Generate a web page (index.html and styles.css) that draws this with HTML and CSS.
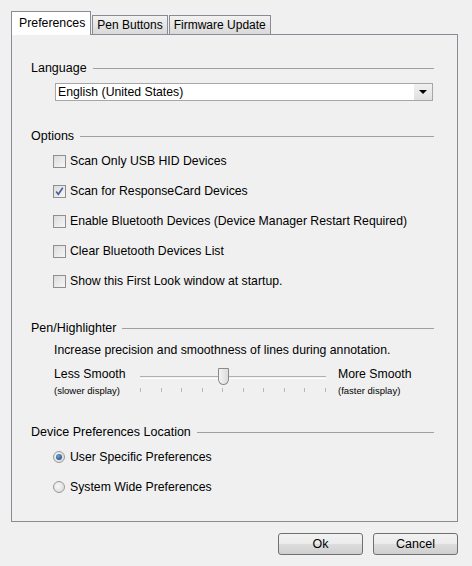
FILE: index.html
```html
<!DOCTYPE html>
<html>
<head>
<meta charset="utf-8">
<link rel="stylesheet" href="styles.css">
</head>
<body>
<div class="window">
  <div class="tabs">
    <div class="tab active">Preferences</div>
    <div class="tab">Pen Buttons</div>
    <div class="tab">Firmware Update</div>
  </div>
  <div class="panel">
    <div class="group-title t-lang"><span>Language</span></div>
    <div class="select">
      <div class="select-value">English (United States)</div>
      <div class="select-btn"><span class="arrow"></span></div>
    </div>

    <div class="group-title t-opts"><span>Options</span></div>
    <div class="options">
      <div class="row"><span class="cb"></span><span>Scan Only USB HID Devices</span></div>
      <div class="row"><span class="cb checked"><svg viewBox="0 0 11 11" width="11" height="11"><path d="M2.2 5.6 L4.3 8.3 L8.8 1.8" fill="none" stroke="#4b5e9c" stroke-width="1.6"/></svg></span><span>Scan for ResponseCard Devices</span></div>
      <div class="row"><span class="cb"></span><span>Enable Bluetooth Devices (Device Manager Restart Required)</span></div>
      <div class="row"><span class="cb"></span><span>Clear Bluetooth Devices List</span></div>
      <div class="row"><span class="cb"></span><span>Show this First Look window at startup.</span></div>
    </div>

    <div class="group-title t-pen"><span>Pen/Highlighter</span></div>
    <div class="desc">Increase precision and smoothness of lines during annotation.</div>
    <div class="slider-block">
      <div class="s-label">
        <div class="s-main">Less Smooth</div>
        <div class="s-sub">(slower display)</div>
      </div>
      <div class="slider">
        <div class="track"></div>
        <div class="thumb"></div>
        <div class="ticks">
          <i></i><i></i><i></i><i></i><i></i><i></i><i></i><i></i><i></i><i></i>
        </div>
      </div>
      <div class="s-label right">
        <div class="s-main">More Smooth</div>
        <div class="s-sub">(faster display)</div>
      </div>
    </div>

    <div class="group-title t-dev"><span>Device Preferences Location</span></div>
    <div class="radios">
      <div class="row"><span class="rb on"></span><span>User Specific Preferences</span></div>
      <div class="row"><span class="rb"></span><span>System Wide Preferences</span></div>
    </div>
  </div>
  <div class="buttons">
    <div class="btn">Ok</div>
    <div class="btn">Cancel</div>
  </div>
</div>
</body>
</html>
```
FILE: styles.css
```css
html, body {
  margin: 0;
  padding: 0;
  background: #f0f0f0;
}
body {
  width: 472px;
  height: 566px;
  overflow: hidden;
  font-family: "Liberation Sans", Arial, sans-serif;
  font-size: 12.25px;
  color: #000;
}
.window {
  padding-top: 11px;
}
.tabs {
  display: flex;
  align-items: flex-end;
  padding-left: 11px;
  height: 23px;
  position: relative;
  z-index: 2;
}
.tab {
  height: 19px;
  box-sizing: border-box;
  border: 1px solid #898c95;
  border-bottom: none;
  padding: 0 4px;
  line-height: 19px;
  font-size: 12px;
  background: linear-gradient(#f2f2f2, #d9d9d9);
  margin-left: 1px;
}
.tab.active {
  height: 24px;
  margin-left: 0;
  margin-bottom: -1px;
  background: #fff;
  padding: 0 5px 0 7px;
  line-height: 22px;
  font-size: 12.3px;
}
.panel {
  width: 447px;
  height: 488px;
  box-sizing: border-box;
  margin-left: 11px;
  border: 1px solid #898c95;
  padding: 0 23px 0 19px;
  position: relative;
  z-index: 1;
}
.group-title {
  display: flex;
  align-items: center;
  height: 16px;
  line-height: 16px;
  font-size: 12.5px;
}
.group-title::after {
  content: "";
  flex: 1;
  border-top: 1px solid #a0a0a0;
  margin-left: 6px;
  margin-top: 1px;
}
.t-lang { margin-top: 25px; }
.t-opts { margin-top: 27px; }
.t-pen { margin-top: 24px; }
.t-dev { margin-top: 28px; }

.select {
  display: flex;
  margin: 7px 1px 0 24px;
  height: 18px;
  box-sizing: border-box;
  border: 1px solid #a6a6a6;
  background: #fff;
}
.select-value {
  flex: 1;
  line-height: 16px;
  padding-left: 2px;
}
.select-btn {
  width: 18px;
  background: linear-gradient(#f1f1f1, #e0e0e0);
  display: flex;
  align-items: center;
  justify-content: center;
}
.arrow {
  width: 0;
  height: 0;
  border-left: 4px solid transparent;
  border-right: 4px solid transparent;
  border-top: 4px solid #000;
}
.options { margin-top: 2px; }
.row {
  display: flex;
  align-items: center;
  height: 30px;
  padding-left: 22px;
}
.cb {
  width: 13px;
  height: 13px;
  box-sizing: border-box;
  border: 1px solid #8f8f8f;
  background: linear-gradient(135deg, #dcdcdc, #f6f6f6);
  margin-right: 4px;
  display: flex;
  align-items: center;
  justify-content: center;
}
.cb svg { display: block; }
.desc {
  margin: 6px 0 0 23px;
  height: 16px;
  line-height: 16px;
}
.slider-block {
  display: flex;
  margin: 8px 0 0 23px;
  height: 30px;
}
.s-label { width: 86px; }
.s-label.right { width: auto; margin-left: 12px; }
.s-main { height: 16px; line-height: 16px; }
.s-sub { height: 14px; line-height: 14px; font-size: 9.5px; margin-top: 2px; }
.slider {
  width: 186px;
  position: relative;
}
.track {
  position: absolute;
  left: 0;
  right: 0;
  top: 10px;
  height: 1px;
  border-top: 1px solid #b0b0b0;
  border-bottom: 1px solid #fff;
}
.thumb {
  position: absolute;
  left: 78px;
  top: 2px;
  width: 11px;
  height: 17px;
  box-sizing: border-box;
  border: 1px solid #8a8a8a;
  border-radius: 1px 1px 5px 5px / 1px 1px 6px 6px;
  background: linear-gradient(90deg, #f4f4f4, #dcdcdc);
}
.ticks {
  position: absolute;
  left: 0;
  right: 0;
  top: 22px;
  height: 4px;
  display: flex;
  justify-content: space-between;
}
.ticks i {
  display: block;
  width: 1px;
  height: 4px;
  background: #b8b8b8;
}
.radios { margin-top: 2px; }
.rb {
  width: 12px;
  height: 12px;
  box-sizing: border-box;
  border-radius: 50%;
  border: 1px solid #9a9a9a;
  background: radial-gradient(circle at 40% 40%, #f8f8f8, #d4d4d4);
  margin-right: 5px;
  position: relative;
}
.rb.on::after {
  content: "";
  position: absolute;
  left: 2px;
  top: 2px;
  width: 6px;
  height: 6px;
  border-radius: 50%;
  background: radial-gradient(circle at 40% 35%, #6aa0d8, #143f74);
}
.buttons {
  display: flex;
  justify-content: flex-end;
  gap: 10px;
  padding-right: 14px;
  margin-top: 11px;
}
.btn {
  width: 85px;
  height: 22px;
  box-sizing: border-box;
  border: 1px solid #707070;
  border-radius: 3px;
  background: linear-gradient(#f2f2f2 0%, #ebebeb 50%, #dddddd 51%, #cfcfcf 100%);
  text-align: center;
  line-height: 20px;
  font-size: 12.5px;
}
```
